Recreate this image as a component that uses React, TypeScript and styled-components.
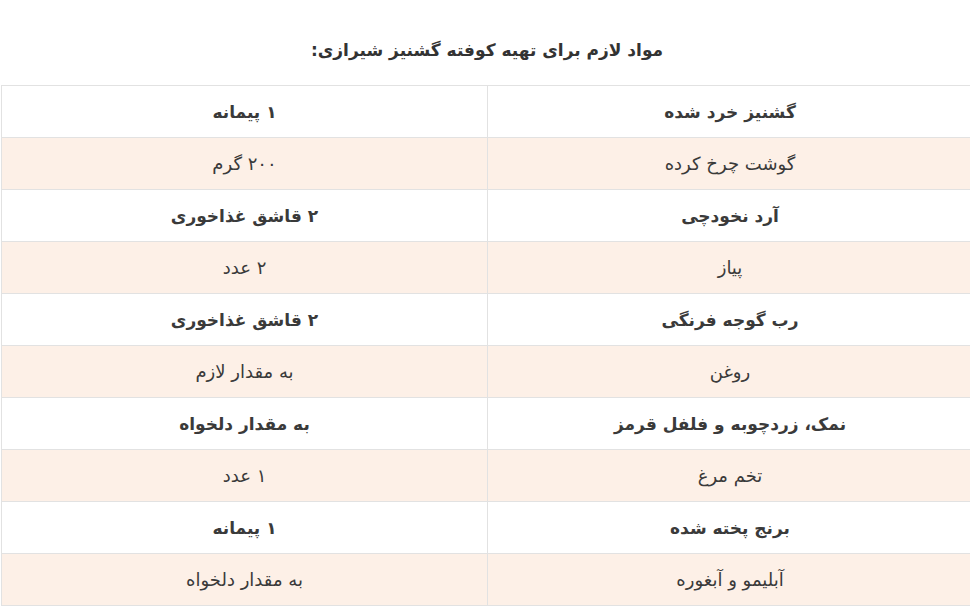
import styled, { createGlobalStyle } from 'styled-components';

const GlobalStyle = createGlobalStyle`
  html, body {
    margin: 0;
    padding: 0;
    background: #ffffff;
    overflow: hidden;
  }
  body {
    font-family: 'DejaVu Sans', 'Noto Sans', sans-serif;
    color: #3a3a3a;
  }
`;

const rows: [string, string][] = [
  ['گشنیز خرد شده', '۱ پیمانه'],
  ['گوشت چرخ کرده', '۲۰۰ گرم'],
  ['آرد نخودچی', '۲ قاشق غذاخوری'],
  ['پیاز', '۲ عدد'],
  ['رب گوجه فرنگی', '۲ قاشق غذاخوری'],
  ['روغن', 'به مقدار لازم'],
  ['نمک، زردچوبه و فلفل قرمز', 'به مقدار دلخواه'],
  ['تخم مرغ', '۱ عدد'],
  ['برنج پخته شده', '۱ پیمانه'],
  ['آبلیمو و آبغوره', 'به مقدار دلخواه'],
];

const Page = styled.div`
  direction: rtl;
  width: 970px;
  padding: 0 0 0 2px;
`;

const Title = styled.h3`
  margin: 0;
  height: 85px;
  display: flex;
  align-items: flex-start;
  justify-content: center;
  padding-top: 40px;
  box-sizing: border-box;
  font-size: 17px;
  font-weight: 700;
  color: #333;
`;

const Table = styled.div`
  width: 970px;
  border-top: 1px solid #e2e2e2;
  border-left: 1px solid #e2e2e2;
`;

const Row = styled.div<{ $shaded: boolean }>`
  display: grid;
  grid-template-columns: 485px 485px;
  height: 52px;
  box-sizing: border-box;
  border-bottom: 1px solid #e2e2e2;
  background: ${(p) => (p.$shaded ? '#fdf0e7' : '#ffffff')};
  font-weight: ${(p) => (p.$shaded ? 400 : 700)};
  font-size: ${(p) => (p.$shaded ? '18px' : '17px')};
`;

const Cell = styled.div<{ $divider?: boolean }>`
  display: flex;
  align-items: center;
  justify-content: center;
  color: #3a3a3a;
  border-left: ${(p) => (p.$divider ? '1px solid #e2e2e2' : 'none')};
`;

export default function App() {
  return (
    <>
      <GlobalStyle />
      <Page>
        <Title>مواد لازم برای تهیه کوفته گشنیز شیرازی:</Title>
        <Table>
          {rows.map(([name, amount], i) => (
            <Row key={name} $shaded={i % 2 === 1}>
              <Cell $divider>{name}</Cell>
              <Cell>{amount}</Cell>
            </Row>
          ))}
        </Table>
      </Page>
    </>
  );
}
